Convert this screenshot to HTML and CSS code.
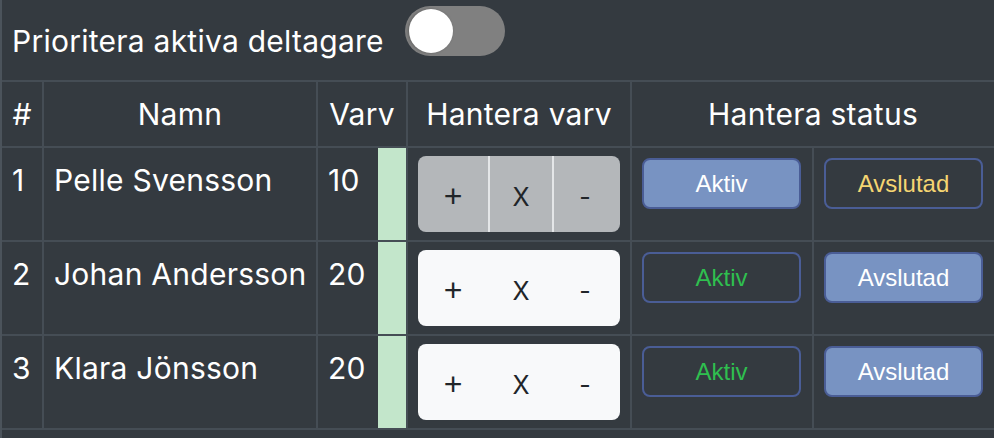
FILE: index.html
```html
<!DOCTYPE html>
<html lang="sv">
<head>
<meta charset="utf-8">
<title>Deltagare</title>
<link rel="stylesheet" href="styles.css">
</head>
<body>
<div class="wrap">
  <div class="topbar">
    <span class="toplabel">Prioritera aktiva deltagare</span>
    <span class="toggle"><span class="knob"></span></span>
  </div>
  <table class="grid">
    <colgroup>
      <col class="c-num">
      <col class="c-name">
      <col class="c-laps">
      <col class="c-bar">
      <col class="c-ctrl">
      <col class="c-stat">
      <col class="c-stat">
    </colgroup>
    <thead>
      <tr>
        <th>#</th>
        <th>Namn</th>
        <th colspan="2">Varv</th>
        <th>Hantera varv</th>
        <th colspan="2" class="last">Hantera status</th>
      </tr>
    </thead>
    <tbody>
      <tr>
        <td>1</td>
        <td>Pelle Svensson</td>
        <td class="laps">10</td>
        <td class="bar"></td>
        <td class="ctrl">
          <div class="btngroup gray">
            <button class="seg first"><span class="plus">+</span></button>
            <button class="seg">X</button>
            <button class="seg">-</button>
          </div>
        </td>
        <td class="stat"><button class="sbtn on">Aktiv</button></td>
        <td class="stat last"><button class="sbtn off yellow">Avslutad</button></td>
      </tr>
      <tr>
        <td>2</td>
        <td>Johan Andersson</td>
        <td class="laps">20</td>
        <td class="bar"></td>
        <td class="ctrl">
          <div class="btngroup light">
            <button class="seg first"><span class="plus">+</span></button>
            <button class="seg">X</button>
            <button class="seg">-</button>
          </div>
        </td>
        <td class="stat"><button class="sbtn off green">Aktiv</button></td>
        <td class="stat last"><button class="sbtn on">Avslutad</button></td>
      </tr>
      <tr>
        <td>3</td>
        <td>Klara Jönsson</td>
        <td class="laps">20</td>
        <td class="bar"></td>
        <td class="ctrl">
          <div class="btngroup light">
            <button class="seg first"><span class="plus">+</span></button>
            <button class="seg">X</button>
            <button class="seg">-</button>
          </div>
        </td>
        <td class="stat"><button class="sbtn off green">Aktiv</button></td>
        <td class="stat last"><button class="sbtn on">Avslutad</button></td>
      </tr>
    </tbody>
  </table>
</div>
</body>
</html>
```
FILE: styles.css
```css
html, body {
  margin: 0;
  padding: 0;
  background: #343a40;
  overflow: hidden;
}
body {
  font-family: Inter, "Noto Sans", sans-serif;
  color: #ffffff;
  letter-spacing: 0.25px;
}
.wrap {
  border-left: 2px solid #4b535b;
  min-height: 438px;
  width: 994px;
}
.topbar {
  display: flex;
  align-items: flex-start;
  height: 80px;
  padding-left: 10px;
}
.toplabel {
  font-size: 30px;
  line-height: 36px;
  margin-top: 23px;
  color: #ffffff;
}
.toggle {
  margin-top: 6px;
  margin-left: 21px;
  width: 100px;
  height: 50px;
  border-radius: 25px;
  background: #808080;
  display: flex;
  align-items: center;
  padding-left: 4px;
  box-sizing: border-box;
}
.knob {
  width: 44px;
  height: 44px;
  border-radius: 50%;
  background: #ffffff;
  box-shadow: -1px 0 3px rgba(0, 0, 0, 0.25);
}
.grid {
  table-layout: fixed;
  border-collapse: separate;
  border-spacing: 0;
  width: 994px;
  border-top: 2px solid #454d55;
  font-size: 30px;
}
.c-num { width: 42px; }
.c-name { width: 274px; }
.c-laps { width: 60px; }
.c-bar { width: 30px; }
.c-ctrl { width: 224px; }
.c-stat { width: 182px; }
th, td {
  border-right: 2px solid #454d55;
  border-bottom: 2px solid #454d55;
  box-sizing: border-box;
}
th {
  font-weight: 400;
  text-align: center;
  vertical-align: middle;
  height: 66px;
  padding: 0;
  line-height: 44px;
  white-space: nowrap;
}
td {
  vertical-align: top;
  padding: 10px;
  line-height: 45px;
  white-space: nowrap;
  height: 94px;
}
td.laps {
  border-right: none;
}
td.bar {
  padding: 0;
  background: #c3e6cb;
}
td.ctrl {
  padding: 8px 10px;
}
.btngroup {
  display: flex;
  height: 76px;
  border-radius: 8px;
  overflow: hidden;
}
.seg {
  flex: 64px 0 0;
  border: none;
  margin: 0;
  padding: 0;
  padding-top: 6px;
  font-family: Inter, "Noto Sans", sans-serif;
  font-size: 25px;
  line-height: 30px;
  color: #212529;
  background: transparent;
}
.seg.first {
  flex-basis: 70px;
}
.plus {
  font-family: "Liberation Sans", Arial, sans-serif;
  font-size: 32px;
  line-height: 30px;
}
.btngroup.gray {
  background: #b4b7ba;
}
.btngroup.gray .seg + .seg {
  border-left: 2px solid #e4e6e8;
}
.btngroup.light {
  background: #f8f9fa;
}
.btngroup.light .seg + .seg {
  border-left: 2px solid #f8f9fa;
}
td.stat {
  padding: 10px;
}
.sbtn {
  display: block;
  width: 159px;
  height: 51px;
  border: 2px solid #4a5d96;
  border-radius: 8px;
  font-family: "Liberation Sans", Arial, sans-serif;
  font-size: 24px;
  letter-spacing: 0;
  padding: 0;
  margin: 0;
}
.sbtn.on {
  background: #7893c2;
  color: #ffffff;
}
.sbtn.off {
  background: transparent;
}
.sbtn.green {
  color: #2fbf4f;
}
.sbtn.yellow {
  color: #f5d572;
}
```
